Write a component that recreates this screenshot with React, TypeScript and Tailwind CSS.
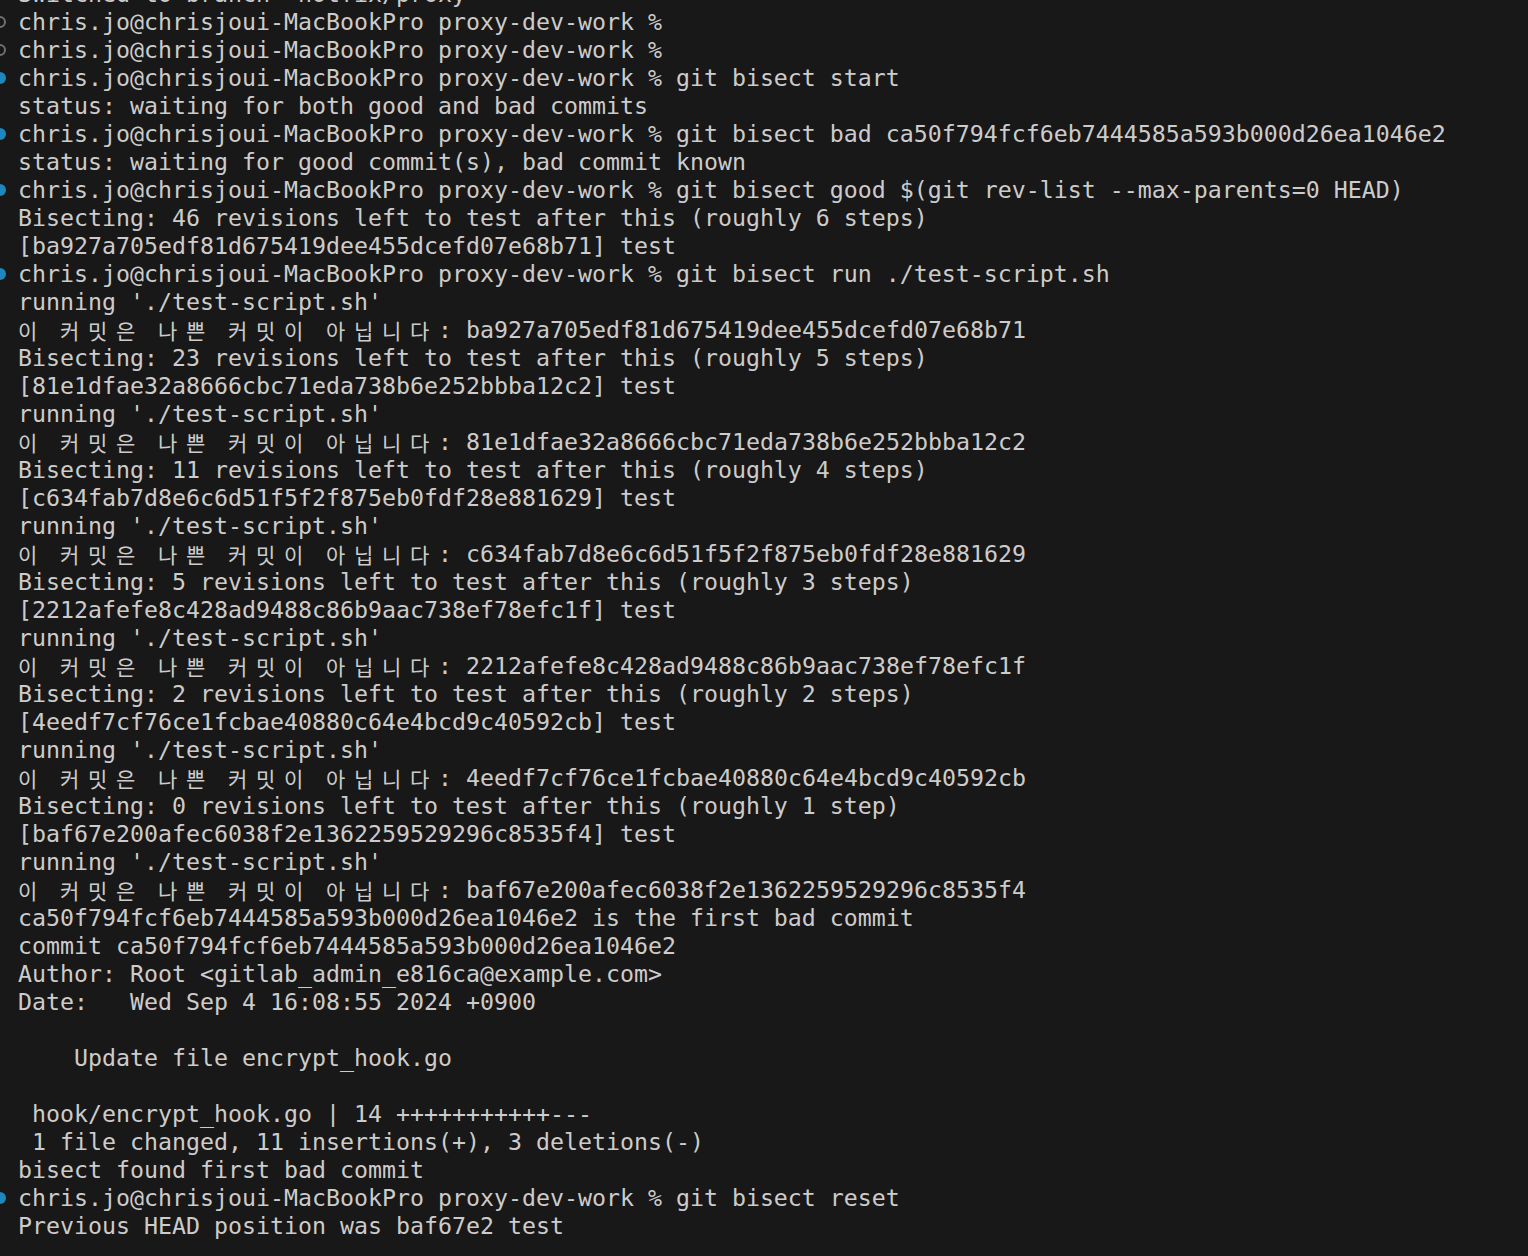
type Mark = 'none' | 'ring' | 'dot';

type Line = { text: string; mark?: Mark };

const PROMPT = 'chris.jo@chrisjoui-MacBookPro proxy-dev-work % ';
const NOT_BAD = '이 커밋은 나쁜 커밋이 아닙니다: ';

const bisectRound = (left: string, steps: string, hash: string): Line[] => [
  { text: `Bisecting: ${left} left to test after this (roughly ${steps})` },
  { text: `[${hash}] test` },
  { text: "running './test-script.sh'" },
  { text: NOT_BAD + hash },
];

const lines: Line[] = [
  { text: "Switched to branch 'hotfix/proxy'" },
  { text: PROMPT, mark: 'ring' },
  { text: PROMPT, mark: 'ring' },
  { text: PROMPT + 'git bisect start', mark: 'dot' },
  { text: 'status: waiting for both good and bad commits' },
  { text: PROMPT + 'git bisect bad ca50f794fcf6eb7444585a593b000d26ea1046e2', mark: 'dot' },
  { text: 'status: waiting for good commit(s), bad commit known' },
  { text: PROMPT + 'git bisect good $(git rev-list --max-parents=0 HEAD)', mark: 'dot' },
  { text: 'Bisecting: 46 revisions left to test after this (roughly 6 steps)' },
  { text: '[ba927a705edf81d675419dee455dcefd07e68b71] test' },
  { text: PROMPT + 'git bisect run ./test-script.sh', mark: 'dot' },
  { text: "running './test-script.sh'" },
  { text: NOT_BAD + 'ba927a705edf81d675419dee455dcefd07e68b71' },
  ...bisectRound('23 revisions', '5 steps', '81e1dfae32a8666cbc71eda738b6e252bbba12c2'),
  ...bisectRound('11 revisions', '4 steps', 'c634fab7d8e6c6d51f5f2f875eb0fdf28e881629'),
  ...bisectRound('5 revisions', '3 steps', '2212afefe8c428ad9488c86b9aac738ef78efc1f'),
  ...bisectRound('2 revisions', '2 steps', '4eedf7cf76ce1fcbae40880c64e4bcd9c40592cb'),
  ...bisectRound('0 revisions', '1 step', 'baf67e200afec6038f2e1362259529296c8535f4'),
  { text: 'ca50f794fcf6eb7444585a593b000d26ea1046e2 is the first bad commit' },
  { text: 'commit ca50f794fcf6eb7444585a593b000d26ea1046e2' },
  { text: 'Author: Root <gitlab_admin_e816ca@example.com>' },
  { text: 'Date:   Wed Sep 4 16:08:55 2024 +0900' },
  { text: '' },
  { text: '    Update file encrypt_hook.go' },
  { text: '' },
  { text: ' hook/encrypt_hook.go | 14 +++++++++++---' },
  { text: ' 1 file changed, 11 insertions(+), 3 deletions(-)' },
  { text: 'bisect found first bad commit' },
  { text: PROMPT + 'git bisect reset', mark: 'dot' },
  { text: 'Previous HEAD position was baf67e2 test' },
];

// 한글은 터미널에서 두 칸(28px)을 차지함
const isHangul = (ch: string) => /[\uac00-\ud7a3]/.test(ch);

const TermText = ({ text }: { text: string }) => {
  const parts: React.ReactNode[] = [];
  let buf = '';
  Array.from(text).forEach((ch, i) => {
    if (isHangul(ch)) {
      if (buf) parts.push(buf);
      buf = '';
      parts.push(
        <span
          key={i}
          className="inline-block w-[28px] text-left align-top font-['Noto_Sans_CJK_KR',sans-serif] text-[21px]"
        >
          {ch}
        </span>,
      );
    } else {
      buf += ch;
    }
  });
  if (buf) parts.push(buf);
  return <>{parts}</>;
};

const Decoration = ({ mark }: { mark: Mark }) => {
  if (mark === 'ring')
    return (
      <span className="absolute left-[-6px] top-[8px] h-[12px] w-[12px] rounded-full border-2 border-[#707070]" />
    );
  if (mark === 'dot')
    return <span className="absolute left-[-6px] top-[8px] h-[12px] w-[12px] rounded-full bg-[#1f87bd]" />;
  return null;
};

export default function App() {
  return (
    <div className="h-[1256px] w-full overflow-hidden bg-[#181818] text-[#cccccc]">
      <div className="-mt-[20px] flex flex-col font-['DejaVu_Sans_Mono','Noto_Sans_CJK_KR',monospace] text-[23.25px]">
        {lines.map((line, i) => (
          <div key={i} className="relative h-[28px] whitespace-pre pl-[18px] leading-[28px]">
            {line.mark && <Decoration mark={line.mark} />}
            <TermText text={line.text} />
          </div>
        ))}
      </div>
    </div>
  );
}
